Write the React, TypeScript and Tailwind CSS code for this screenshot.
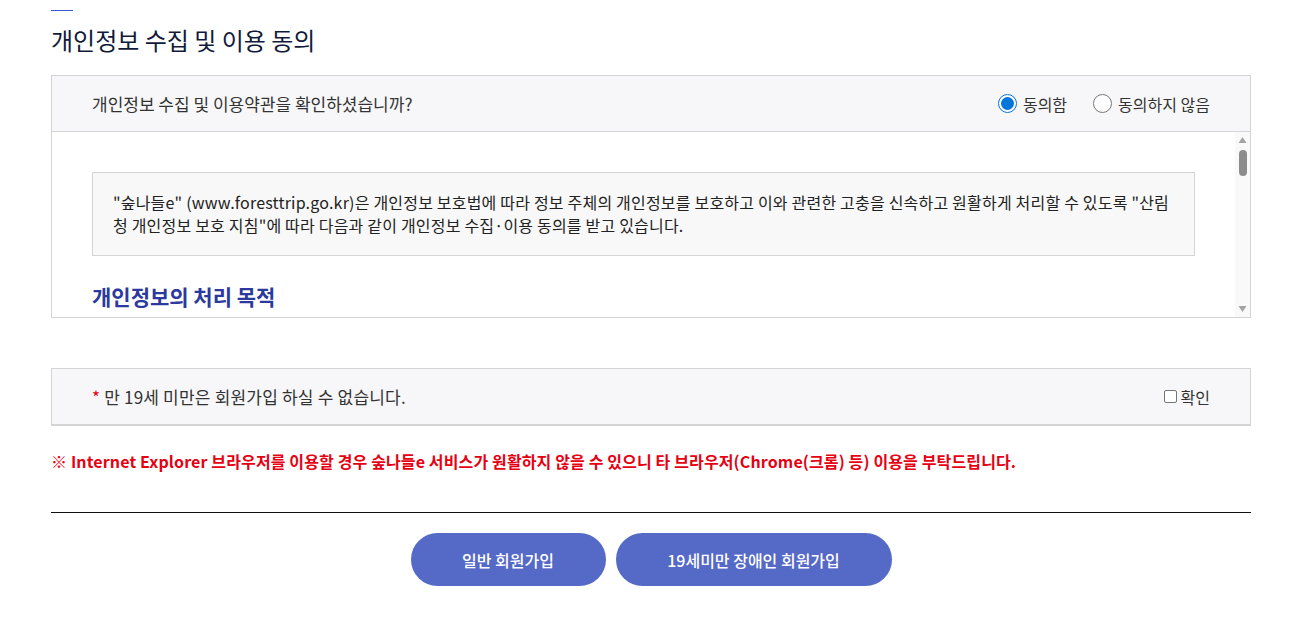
const font = { fontFamily: '"Noto Sans CJK KR", "Noto Sans", sans-serif' };

function Radio({ checked, label }: { checked?: boolean; label: string }) {
  return (
    <label className="flex items-center gap-[6px]">
      <span
        className={`flex h-[19px] w-[19px] items-center justify-center rounded-full border ${
          checked ? "border-[#0075db]" : "border-[#767676]"
        } bg-white`}
      >
        {checked ? <span className="h-[13px] w-[13px] rounded-full bg-[#0075db]" /> : null}
      </span>
      <span className="text-[16px] text-[#333]">{label}</span>
    </label>
  );
}

function FakeScrollbar() {
  return (
    <div className="flex w-[15px] shrink-0 flex-col items-center bg-[#f9f9f9]">
      <svg width="9" height="8" viewBox="0 0 9 8" className="mt-[4px]">
        <path d="M4.5 1 L8.5 7 L0.5 7 Z" fill="#a3a3a3" />
      </svg>
      <div className="mt-[6px] h-[26px] w-[8px] rounded-full bg-[#8c8c8c]" />
      <div className="flex-1" />
      <svg width="9" height="8" viewBox="0 0 9 8" className="mb-[4px]">
        <path d="M0.5 1 L8.5 1 L4.5 7 Z" fill="#a3a3a3" />
      </svg>
    </div>
  );
}

export default function App() {
  return (
    <div className="min-h-[623px] bg-white" style={font}>
      <div className="ml-[51px] w-[1200px] pt-[10px]">
        <div className="h-px w-[22px] bg-[#3d5bd0]" />
        <h2 className="mt-[13px] text-[24px] leading-[32px] font-normal text-[#111a3a]">
          개인정보 수집 및 이용 동의
        </h2>

        <div className="mt-[19px] border border-[#d4d4d4]">
          <div className="flex h-[56px] items-center justify-between border-b border-[#d4d4d4] bg-[#f7f7f9] pr-[40px] pl-[40px]">
            <p className="text-[17px] text-[#333]">개인정보 수집 및 이용약관을 확인하셨습니까?</p>
            <div className="flex items-center gap-[26px]">
              <Radio checked label="동의함" />
              <Radio label="동의하지 않음" />
            </div>
          </div>
          <div className="flex h-[185px]">
            <div className="flex-1 overflow-hidden pt-[40px] pr-[40px] pl-[40px]">
              <div className="border border-[#d4d4d4] bg-[#f8f8f8] px-[20px] pt-[18px] pb-[18px] text-[16px] leading-[23px] tracking-[0.2px] text-[#222]">
                "숲나들e" (www.foresttrip.go.kr)은 개인정보 보호법에 따라 정보 주체의 개인정보를 보호하고 이와 관련한 고충을 신속하고 원활하게 처리할 수 있도록 "산림청 개인정보 보호 지침"에 따라 다음과 같이 개인정보 수집·이용 동의를 받고 있습니다.
              </div>
              <h3 className="mt-[26px] text-[21px] leading-[28px] font-semibold text-[#2b3a9c]">
                개인정보의 처리 목적
              </h3>
            </div>
            <FakeScrollbar />
          </div>
        </div>

        <div className="mt-[50px] flex h-[58px] items-center justify-between border border-b-2 border-[#d4d4d4] bg-[#f7f7f9] pr-[40px] pl-[40px]">
          <p className="text-[17px] tracking-[0.2px] text-[#333]">
            <span className="text-[#e60012]">*</span> 만 19세 미만은 회원가입 하실 수 없습니다.
          </p>
          <label className="flex items-center gap-[4px]">
            <span className="h-[13px] w-[13px] rounded-[2px] border border-[#767676] bg-white" />
            <span className="text-[16px] text-[#333]">확인</span>
          </label>
        </div>

        <p className="mt-[23px] text-[16px] leading-[24px] font-bold tracking-[0.13px] text-[#e60012]">
          ※ Internet Explorer 브라우저를 이용할 경우 숲나들e 서비스가 원활하지 않을 수 있으니 타 브라우저(Chrome(크롬) 등) 이용을 부탁드립니다.
        </p>

        <div className="mt-[39px] h-px bg-[#111]" />

        <div className="mt-[20px] flex justify-center gap-[10px]">
          <button className="h-[53px] w-[195px] rounded-full bg-[#5569c7] text-[16px] font-medium text-white">
            일반 회원가입
          </button>
          <button className="h-[53px] w-[276px] rounded-full bg-[#5569c7] text-[16px] font-medium text-white">
            19세미만 장애인 회원가입
          </button>
        </div>
      </div>
    </div>
  );
}
